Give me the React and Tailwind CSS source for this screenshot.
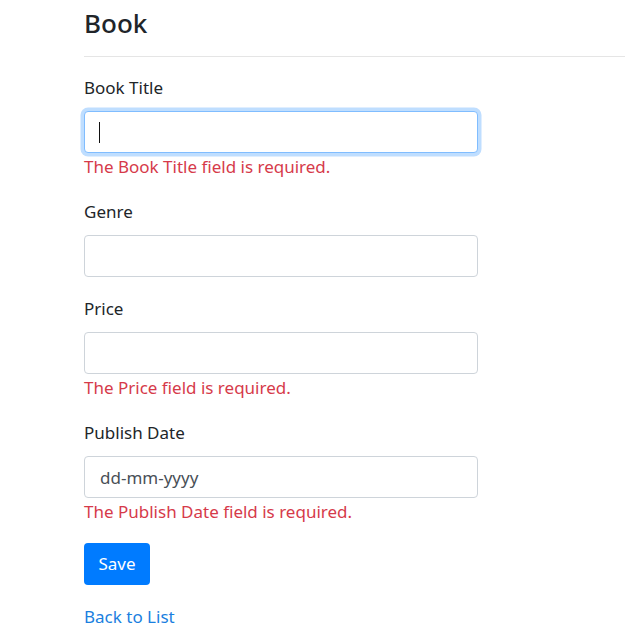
import React from 'react';

const Field = ({ label, placeholder, error, focused }) => (
    <div className={error ? "mb-[18px]" : "mb-[19px]"}>
        <label className="block h-[26px] leading-[26px] mb-[10px] text-[#212529]">{label}</label>
        {focused ? (
            <div className="w-[394px] h-[42px] rounded-[4px] border border-[#80bdff] shadow-[0_0_0_3.5px_rgba(0,123,255,0.25)] bg-white flex items-center pl-[14px]">
                <span className="block w-px h-[21px] bg-[#111]"></span>
            </div>
        ) : (
            <input
                type="text"
                placeholder={placeholder}
                className="block w-[394px] h-[42px] rounded-[4px] border border-[#ced4da] bg-white px-[15px] text-[#495057] placeholder:text-[#495057] outline-none"
            />
        )}
        {error && <div className="h-[28px] leading-[28px] text-[#d63a4a]">{error}</div>}
    </div>
);

export default function App() {
    return (
        <div className="min-h-[640px] bg-white pl-[84px] text-[17px]" style={{ fontFamily: '"Noto Sans", "Open Sans", sans-serif' }}>
            <h4 className="pt-[7px] h-[39px] leading-[32px] text-[26px] font-medium text-[#212529]">Book</h4>
            <hr className="mt-[17px] border-t border-[#e5e5e5]" />

            <div className="pt-[18px] w-[394px]">
                <Field label="Book Title" focused error="The Book Title field is required." />
                <Field label="Genre" />
                <Field label="Price" error="The Price field is required." />
                <Field label="Publish Date" placeholder="dd-mm-yyyy" error="The Publish Date field is required." />

                <button className="-mt-px w-[66px] h-[42px] rounded-[4px] bg-[#007bff] text-white">Save</button>
            </div>

            <div className="mt-[19px] h-[26px] leading-[26px]">
                <a href="#" className="text-[#1a7fe0]">Back to List</a>
            </div>
        </div>
    );
}
